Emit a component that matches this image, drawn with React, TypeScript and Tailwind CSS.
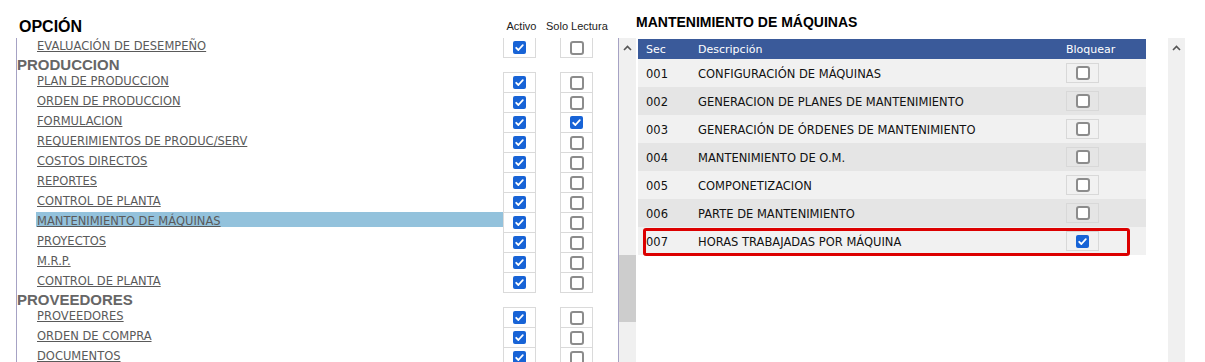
import React from "react";

const Check = ({ on }: { on: boolean }) =>
  on ? (
    <span className="flex h-[13px] w-[13px] items-center justify-center rounded-[2px] bg-[#1763d6]">
      <svg width="13" height="13" viewBox="0 0 13 13">
        <path d="M3.2 6.8 L5.4 9 L9.8 4.2" fill="none" stroke="#fff" strokeWidth="1.8" strokeLinecap="round" strokeLinejoin="round" />
      </svg>
    </span>
  ) : (
    <span className="block h-[14px] w-[14px] rounded-[3px] border-2 border-[#8c8c8c] bg-white" />
  );

type Item = { label: string; a: boolean; s: boolean; hl?: boolean };
type Group = { title?: string; items: Item[] };

const groups: Group[] = [
  { items: [{ label: "EVALUACIÓN DE DESEMPEÑO", a: true, s: false }] },
  {
    title: "PRODUCCION",
    items: [
      { label: "PLAN DE PRODUCCION", a: true, s: false },
      { label: "ORDEN DE PRODUCCION", a: true, s: false },
      { label: "FORMULACION", a: true, s: true },
      { label: "REQUERIMIENTOS DE PRODUC/SERV", a: true, s: false },
      { label: "COSTOS DIRECTOS", a: true, s: false },
      { label: "REPORTES", a: true, s: false },
      { label: "CONTROL DE PLANTA", a: true, s: false },
      { label: "MANTENIMIENTO DE MÁQUINAS", a: true, s: false, hl: true },
      { label: "PROYECTOS", a: true, s: false },
      { label: "M.R.P.", a: true, s: false },
      { label: "CONTROL DE PLANTA", a: true, s: false },
    ],
  },
  {
    title: "PROVEEDORES",
    items: [
      { label: "PROVEEDORES", a: true, s: false },
      { label: "ORDEN DE COMPRA", a: true, s: false },
      { label: "DOCUMENTOS", a: true, s: false },
    ],
  },
];

const rows = [
  { sec: "001", d: "CONFIGURACIÓN DE MÁQUINAS", b: false },
  { sec: "002", d: "GENERACION DE PLANES DE MANTENIMIENTO", b: false },
  { sec: "003", d: "GENERACIÓN DE ÓRDENES DE MANTENIMIENTO", b: false },
  { sec: "004", d: "MANTENIMIENTO DE O.M.", b: false },
  { sec: "005", d: "COMPONETIZACION", b: false },
  { sec: "006", d: "PARTE DE MANTENIMIENTO", b: false },
  { sec: "007", d: "HORAS TRABAJADAS POR MÁQUINA", b: true },
];

const Chevron = () => (
  <svg width="9" height="6" viewBox="0 0 9 6">
    <path d="M1 5 L4.5 1.5 L8 5" fill="none" stroke="#555" strokeWidth="1.6" />
  </svg>
);

const dv = { fontFamily: '"DejaVu Sans", Verdana, sans-serif' };
const ar = { fontFamily: '"Liberation Sans", Arial, sans-serif' };

export default function App() {
  return (
    <div className="flex h-[362px] w-[1205px] overflow-hidden bg-white">
      {/* LEFT */}
      <div className="flex w-[636px] flex-col">
        <div className="flex h-[38px] shrink-0" style={ar}>
          <div className="w-[503px] pl-[19px] pt-[19px] text-[16px] font-bold leading-[16px] text-black">OPCIÓN</div>
          <div className="w-[37px] pt-[21px] text-center text-[11px] leading-[11px] text-[#222]">Activo</div>
          <div className="ml-[6px] whitespace-nowrap pt-[21px] text-[11px] leading-[11px] text-[#222]">Solo Lectura</div>
        </div>
        <div className="flex flex-1">
          <div className="ml-[16px] flex-1 overflow-hidden border-l border-[#a6a2c4]">
            <div className="-mt-px">
              {groups.map((g, gi) => (
                <div key={gi}>
                  {g.title && (
                    <div className="h-[15px] text-[15px] font-bold leading-[15px] text-[#666]" style={ar}>
                      {g.title}
                    </div>
                  )}
                  {g.items.map((it, i) => {
                    const last = i === g.items.length - 1;
                    return (
                      <div key={i} className="flex h-[20px] items-start">
                        <div className="ml-[19px] w-[467px]">
                          <div
                            className={`h-[15px] pl-px text-[11.5px] leading-[18px] text-[#5a5a5a] underline ${it.hl ? "bg-[#93c2dc]" : ""}`}
                            style={dv}
                          >
                            {it.label}
                          </div>
                        </div>
                        <div className={`flex h-[20px] w-[33px] items-center justify-center border-x border-t border-[#dadada] ${last ? "h-[21px] border-b" : ""}`}>
                          <Check on={it.a} />
                        </div>
                        <div className={`ml-[24px] flex h-[20px] w-[33px] items-center justify-center border-x border-t border-[#dadada] ${last ? "h-[21px] border-b" : ""}`}>
                          <Check on={it.s} />
                        </div>
                      </div>
                    );
                  })}
                </div>
              ))}
            </div>
          </div>
          <div className="flex w-[18px] flex-col border-l border-[#a6a2c4] bg-[#f0f0f0]">
            <div className="flex h-[16px] items-center justify-center pt-[3px]">
              <Chevron />
            </div>
            <div className="mt-[201px] h-[67px] bg-[#cdcdcd]" />
          </div>
        </div>
      </div>

      {/* RIGHT */}
      <div className="flex flex-1 flex-col">
        <div className="mt-[15px] h-[14px] text-[14px] font-bold leading-[14px] text-black" style={ar}>
          MANTENIMIENTO DE MÁQUINAS
        </div>
        <div className="mt-[9px] flex flex-1">
          <div className="ml-[2px] mt-px w-[508px]" style={dv}>
            <div className="flex h-[20px] items-center bg-[#3a5a9a] pt-[2px] text-[11px] text-white">
              <div className="w-[52px] pl-[8px]">Sec</div>
              <div className="w-[368px] pl-[8px]">Descripción</div>
              <div className="pl-[8px]">Bloquear</div>
            </div>
            {rows.map((r, i) => (
              <div
                key={r.sec}
                className={`relative flex h-[28px] items-center text-[11.5px] text-[#111] ${i % 2 === 0 ? "bg-[#f1f1f1]" : "bg-[#e5e5e5]"}`}
              >
                <div className="w-[52px] pl-[8px] pt-[3px]">{r.sec}</div>
                <div className="w-[368px] whitespace-nowrap pl-[8px] pt-[3px]">{r.d}</div>
                <div className="pl-[8px]">
                  <div className="flex h-[20px] w-[33px] items-center justify-center border border-[#d8d8d8]">
                    <Check on={r.b} />
                  </div>
                </div>
                {r.b && (
                  <div className="absolute left-[5px] top-px h-[28px] w-[487px] rounded-[3px] border-[3px] border-[#dc0000]" />
                )}
              </div>
            ))}
          </div>
          <div className="ml-[22px] w-[17px] bg-[#f0f0f0]">
            <div className="flex h-[16px] items-center justify-center pt-[3px]">
              <Chevron />
            </div>
          </div>
        </div>
      </div>
    </div>
  );
}
